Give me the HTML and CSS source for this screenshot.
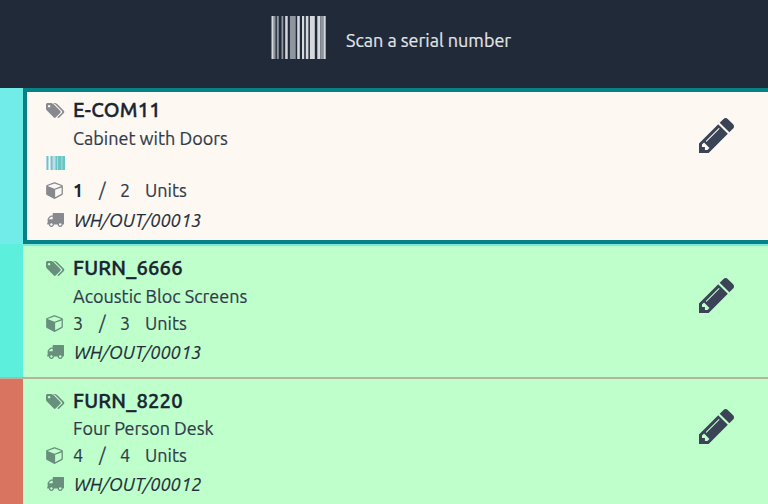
FILE: index.html
```html
<!DOCTYPE html>
<html lang="en">
<head>
<meta charset="utf-8">
<title>Barcode</title>
<link rel="stylesheet" href="styles.css">
</head>
<body>
<svg class="defs" width="0" height="0" aria-hidden="true">
  <symbol id="tags" viewBox="0 128 1899 1515"><path d="M448 448q0-53-37.5-90.5t-90.5-37.5-90.5 37.5-37.5 90.5 37.5 90.5 90.5 37.5 90.5-37.5 37.5-90.5zm1067 576q0 53-37 90l-491 492q-39 37-91 37-53 0-90-37l-715-716q-38-37-64.5-101t-26.5-117v-416q0-52 38-90t90-38h416q53 0 117 26.5t102 64.5l715 714q37 39 37 91zm384 0q0 53-37 90l-491 492q-39 37-91 37-36 0-59-14t-53-45l470-470q37-37 37-90 0-52-37-91l-715-714q-38-38-102-64.5t-117-26.5h224q53 0 117 26.5t102 64.5l715 714q37 39 37 91z"/></symbol>
  <symbol id="cube" viewBox="0 0 1664 1792"><path d="M896 1629l640-349v-636l-640 233v752zm-64-865l698-254-698-254-698 254zm832-252v768q0 35-18 65t-49 47l-704 384q-28 16-61 16t-61-16l-704-384q-31-17-49-47t-18-65v-768q0-40 23-73t61-47l704-256q22-8 44-8t44 8l704 256q38 14 61 47t23 73z"/></symbol>
  <symbol id="truck" viewBox="64 256 1728 1408"><path d="M640 1408q0-52-38-90t-90-38-90 38-38 90 38 90 90 38 90-38 38-90zm-384-512h384v-256h-158q-13 0-22 9l-195 195q-9 9-9 22v30zm1280 512q0-52-38-90t-90-38-90 38-38 90 38 90 90 38 90-38 38-90zm256-1088v1024q0 15-4 26.5t-13.5 18.5-16.5 11.5-23.5 6-22.5 2-25.5 0-22.5-.5q0 106-75 181t-181 75-181-75-75-181h-384q0 106-75 181t-181 75-181-75-75-181h-64q-3 0-22.5.5t-25.5 0-22.5-2-23.5-6-16.5-11.5-13.5-18.5-4-26.5q0-26 19-45t45-19v-320q0-8-.5-35t0-38 2.5-34.5 6.5-37 14-30.5 22.5-30l198-198q19-19 50.5-32t58.5-13h160v-192q0-26 19-45t45-19h1024q26 0 45 19t19 45z"/></symbol>
  <symbol id="pencil" viewBox="128 149 1515 1515"><path d="M491 1536l91-91-235-235-91 91v107h128v128h107zm523-928q0-22-22-22-10 0-17 7l-542 542q-7 7-7 17 0 22 22 22 10 0 17-7l542-542q7-7 7-17zm-54-192l416 416-832 832h-416v-416zm683 96q0 53-37 90l-166 166-416-416 166-165q36-38 90-38 53 0 91 38l235 234q37 39 37 91z"/></symbol>
</svg>

<header class="scan-bar">
  <svg class="scan-icon" viewBox="0 0 55 43" aria-hidden="true">
    <path class="bar-bright" d="M.5 0h2.3v43H.5zM14.2 0h2.5v43h-2.5zM26.2 0h2.6v43h-2.6zM31 0h2.2v43H31zM34.8 0h2.6v43h-2.6zM38.9 0h4.9v43h-4.9zM46.3 0h3v43h-3zM52.3 0h2.4v43h-2.4z"/>
    <path class="bar-dim" d="M2.6 0h1.9v43H2.6zM5.8 0h2v43h-2zM10.5 0h1.8v43h-1.8zM18.9 0h5.8v43h-5.8zM49.3 0h3v43h-3z"/>
  </svg>
  <span class="scan-text">Scan a serial number</span>
</header>

<main class="lines">
  <article class="line line-selected">
    <div class="stripe stripe-light"></div>
    <div class="card">
      <div class="details">
        <div class="row title-row"><svg class="icon tags"><use href="#tags"/></svg><strong class="title">E-COM11</strong></div>
        <div class="row name-row"><span class="name">Cabinet with Doors</span></div>
        <div class="row serial-row"><svg class="serial" viewBox="0 0 19 14"><path class="serial-base" d="M0 0h2.5v14H0zM4 0h15v14H4z"/><path class="serial-pale" d="M0 0h.8v14H0zM4 0h1v14H4zM6.5 0h3v14h-3zM11 0h.8v14H11zM15.5 0h.8v14h-.8z"/></svg></div>
        <div class="row qty-row"><svg class="icon cube"><use href="#cube"/></svg><b class="done">1</b><span class="slash">/</span><span class="demand">2</span><span class="unit">Units</span></div>
        <div class="row pick-row"><svg class="icon truck"><use href="#truck"/></svg><i class="pick">WH/OUT/00013</i></div>
      </div>
      <svg class="edit"><use href="#pencil"/></svg>
    </div>
  </article>

  <article class="line line-second">
    <div class="stripe stripe-cyan"></div>
    <div class="card">
      <div class="details">
        <div class="row title-row"><svg class="icon tags"><use href="#tags"/></svg><strong class="title">FURN_6666</strong></div>
        <div class="row name-row"><span class="name">Acoustic Bloc Screens</span></div>
        <div class="row qty-row"><svg class="icon cube"><use href="#cube"/></svg><span class="done">3</span><span class="slash">/</span><span class="demand">3</span><span class="unit">Units</span></div>
        <div class="row pick-row"><svg class="icon truck"><use href="#truck"/></svg><i class="pick">WH/OUT/00013</i></div>
      </div>
      <svg class="edit"><use href="#pencil"/></svg>
    </div>
  </article>

  <article class="line line-third">
    <div class="stripe stripe-red"></div>
    <div class="card">
      <div class="details">
        <div class="row title-row"><svg class="icon tags"><use href="#tags"/></svg><strong class="title">FURN_8220</strong></div>
        <div class="row name-row"><span class="name">Four Person Desk</span></div>
        <div class="row qty-row"><svg class="icon cube"><use href="#cube"/></svg><span class="done">4</span><span class="slash">/</span><span class="demand">4</span><span class="unit">Units</span></div>
        <div class="row pick-row"><svg class="icon truck"><use href="#truck"/></svg><i class="pick">WH/OUT/00012</i></div>
      </div>
      <svg class="edit"><use href="#pencil"/></svg>
    </div>
  </article>
</main>
</body>
</html>
```

FILE: styles.css
```css
* { box-sizing: border-box; }
body {
  margin: 0;
  height: 504px;
  overflow: hidden;
  background: #bfffcc;
  color: #303b4a;
  font: 18px/28px Ubuntu, "Noto Sans", sans-serif;
  -webkit-text-stroke: .2px currentColor;
  white-space: nowrap;
}
svg { display: block; flex: none; }
.defs { position: absolute; }

.scan-bar {
  display: flex;
  height: 88px;
  padding: 16px 0 0 271px;
  background: #212a39;
}
.scan-icon { width: 55px; height: 43px; }
.bar-bright { fill: #d5d8dc; }
.bar-dim { fill: #8f959d; }
.scan-text { margin: 10px 0 0 20px; color: #e2e5e9; }

.line { display: flex; }
.stripe { flex: none; width: 23px; }
.stripe-light { background: #72ece8; }
.stripe-cyan { background: #5cf0dc; }
.stripe-red { background: #d87460; }
.card { display: flex; flex: 1; justify-content: space-between; padding: 0 34px 0 23px; background: #bfffcc; }

.line-selected { height: 156px; }
.line-selected .card { padding: 4px 34px 0 19px; background: #fdf9f2; border: solid #048287; border-width: 4px 0 4px 4px; }
.line-second { height: 135px; border-bottom: 2px solid #b7b39c; }
.line-second .card { padding-top: 8px; border-top: 2px solid #7deadb; }
.line-third { height: 125px; }
.line-third .card { padding-top: 8px; }

.row { display: flex; align-items: center; height: 28px; }
.icon { fill: #87898f; }
.line-second .icon, .line-third .icon { fill: #688e7c; }
.tags { width: 18.5px; height: 15px; margin-right: 8.5px; }
.cube { width: 17px; height: 18px; margin-right: 10px; }
.truck { width: 17px; height: 14px; margin: 1px 10px 0 1px; }
.title { font-size: 20.2px; font-weight: 500; letter-spacing: .2px; color: #1a2332; -webkit-text-stroke-width: .4px; }
.name-row { height: 27px; }
.name { margin-left: 27px; }
.serial-row { height: 23px; }
.serial { width: 19px; height: 14px; }
.serial-base { fill: #68c6c2; }
.serial-pale { fill: #bfdcea; }
.qty-row { height: 27px; }
.line-selected .qty-row { height: 28px; margin-top: 2px; }
.line-third .name-row { height: 26px; }
.done { width: 26px; }
b.done { color: #1a2332; -webkit-text-stroke-width: 0; }
.slash { width: 21px; }
.demand { width: 25px; }
.pick-row { height: 31px; }
.pick { color: #222c3a; }

.edit { width: 35px; height: 35px; margin-top: 22px; fill: #3a4456; }
.line-second .edit { margin-top: 24px; }
.line-third .edit { margin-top: 22px; }
```
